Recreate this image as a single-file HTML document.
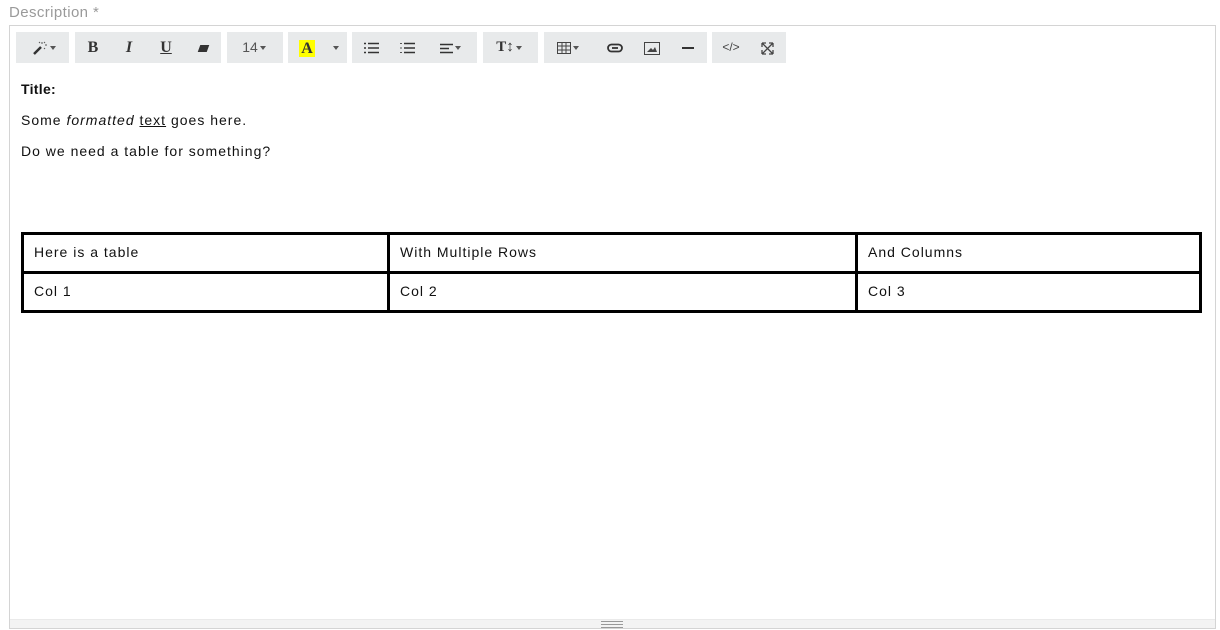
<!DOCTYPE html>
<html><head><meta charset="utf-8"><style>
*{box-sizing:border-box;margin:0;padding:0}
body{width:1220px;height:630px;background:#fff;font-family:"Liberation Sans",sans-serif;position:relative;overflow:hidden;color:#222}
.lbl{position:absolute;left:9px;top:4px;font-size:15px;color:#9a9a9a;letter-spacing:.4px}
.box{position:absolute;left:9px;top:25px;width:1207px;height:604px;border:1px solid #d4d4d4}
.g{position:absolute;top:32px;height:31px;background:#e8eaeb}
.i{position:absolute;top:32px;height:31px;line-height:31px;font-size:14px;color:#333;text-align:center}
.car{display:inline-block;width:0;height:0;border-left:3px solid transparent;border-right:3px solid transparent;border-top:4px solid #555;vertical-align:middle;margin-left:2px}
.t{position:absolute;left:21px;font-size:14px;color:#111;letter-spacing:1px}
table{position:absolute;left:21px;top:232px;width:1181px;border-collapse:collapse}
td{border:3px solid #000;height:39px;padding:0 10px 3px 10px;font-size:14px;color:#111;letter-spacing:1px}
.bar{position:absolute;left:10px;top:619px;width:1205px;height:9px;background:#f3f3f3;border-top:1px solid #eaeaea}
.bar div{position:absolute;left:591px;width:22px;height:1px;background:#999}
</style></head><body>
<div class="lbl">Description *</div>
<div class="box"></div>
<div class="g" style="left:16px;width:53px"></div>
<div class="g" style="left:75px;width:146px"></div>
<div class="g" style="left:227px;width:56px"></div>
<div class="g" style="left:288px;width:59px"></div>
<div class="g" style="left:352px;width:125px"></div>
<div class="g" style="left:483px;width:55px"></div>
<div class="g" style="left:544px;width:163px"></div>
<div class="g" style="left:712px;width:74px"></div>

<div class="i" style="left:24px;width:40px"><svg width="16" height="14" viewBox="0 0 16 14" style="vertical-align:middle"><path d="M2 13L9 6" stroke="#333" stroke-width="2.5"/><path d="M10 1v2M13 4h2M12 2l1-1M12 7l1 1M8 2l-1-1" stroke="#555" stroke-width="1"/></svg><span class="car"></span></div>
<div class="i" style="left:84px;width:18px;font-family:'Liberation Serif',serif;font-weight:bold;font-size:16px">B</div>
<div class="i" style="left:120px;width:18px;font-family:'Liberation Serif',serif;font-style:italic;font-weight:bold;font-size:16px">I</div>
<div class="i" style="left:157px;width:18px;font-family:'Liberation Serif',serif;font-weight:bold;font-size:16px;text-decoration:underline">U</div>
<div class="i" style="left:196px;width:14px"><span style="display:inline-block;width:9px;height:7px;background:#333;transform:skewX(-20deg);vertical-align:middle"></span></div>
<div class="i" style="left:236px;width:36px;color:#555">14<span class="car"></span></div>
<div class="i" style="left:298px;width:18px"><span style="display:inline-block;background:#ff0;font-family:'Liberation Serif',serif;font-weight:bold;font-size:16px;line-height:17px;padding:0 2px;vertical-align:middle">A</span></div>
<div class="i" style="left:330px;width:10px"><span class="car"></span></div>
<div class="i" style="left:362px;width:18px"><svg width="15" height="12" style="vertical-align:middle"><path d="M0 1.5h2M4 1.5h11M0 6h2M4 6h11M0 10.5h2M4 10.5h11" stroke="#333" stroke-width="1.6"/></svg></div>
<div class="i" style="left:398px;width:18px"><svg width="15" height="12" style="vertical-align:middle"><path d="M4 1.5h11M4 6h11M4 10.5h11" stroke="#333" stroke-width="1.6"/><path d="M0 1.5h2M0 6h2M0 10.5h2" stroke="#555" stroke-width="1"/></svg></div>
<div class="i" style="left:434px;width:32px"><svg width="13" height="11" style="vertical-align:middle"><path d="M0 1.5h13M0 5.5h9M0 9.5h13" stroke="#333" stroke-width="1.6"/></svg><span class="car"></span></div>
<div class="i" style="left:493px;width:32px;font-family:'Liberation Serif',serif;font-weight:bold;font-size:15px">T↕<span class="car"></span></div>
<div class="i" style="left:553px;width:30px"><svg width="14" height="12" style="vertical-align:middle"><path d="M.5.5h13v11h-13zM.5 4h13M.5 8h13M5 .5v11M9 .5v11" stroke="#444" fill="none"/></svg><span class="car"></span></div>
<div class="i" style="left:606px;width:18px"><svg width="16" height="10" style="vertical-align:middle"><rect x="1" y="1.5" width="14" height="7" rx="3.5" fill="none" stroke="#333" stroke-width="1.8"/><path d="M5 5h6" stroke="#333" stroke-width="1.8"/></svg></div>
<div class="i" style="left:643px;width:18px"><svg width="16" height="13" style="vertical-align:middle"><rect x=".5" y=".5" width="15" height="12" fill="none" stroke="#444"/><path d="M3 10l4-4 2 2 2-3 2 5z" fill="#444"/></svg></div>
<div class="i" style="left:679px;width:18px"><span style="display:inline-block;width:12px;height:2px;background:#333;vertical-align:middle"></span></div>
<div class="i" style="left:719px;width:24px;font-size:12px;color:#444">&lt;/&gt;</div>
<div class="i" style="left:758px;width:18px"><svg width="13" height="13" style="vertical-align:middle"><path d="M1 1l11 11M12 1L1 12M1 1h4M1 1v4M12 1h-4M12 1v4M1 12h4M1 12v-4M12 12h-4M12 12v-4" stroke="#444" stroke-width="1.3" fill="none"/></svg></div>

<div class="t" style="top:81px;font-weight:bold;letter-spacing:.3px">Title:</div>
<div class="t" style="top:112px">Some <i>formatted</i> <u>text</u> goes here.</div>
<div class="t" style="top:143px">Do we need a table for something?</div>
<table>
<tr><td style="width:366px">Here is a table</td><td style="width:468px">With Multiple Rows</td><td>And Columns</td></tr>
<tr><td>Col 1</td><td>Col 2</td><td>Col 3</td></tr>
</table>
<div class="bar"><div style="top:1px"></div><div style="top:4px"></div><div style="top:7px"></div></div>
</body></html>
